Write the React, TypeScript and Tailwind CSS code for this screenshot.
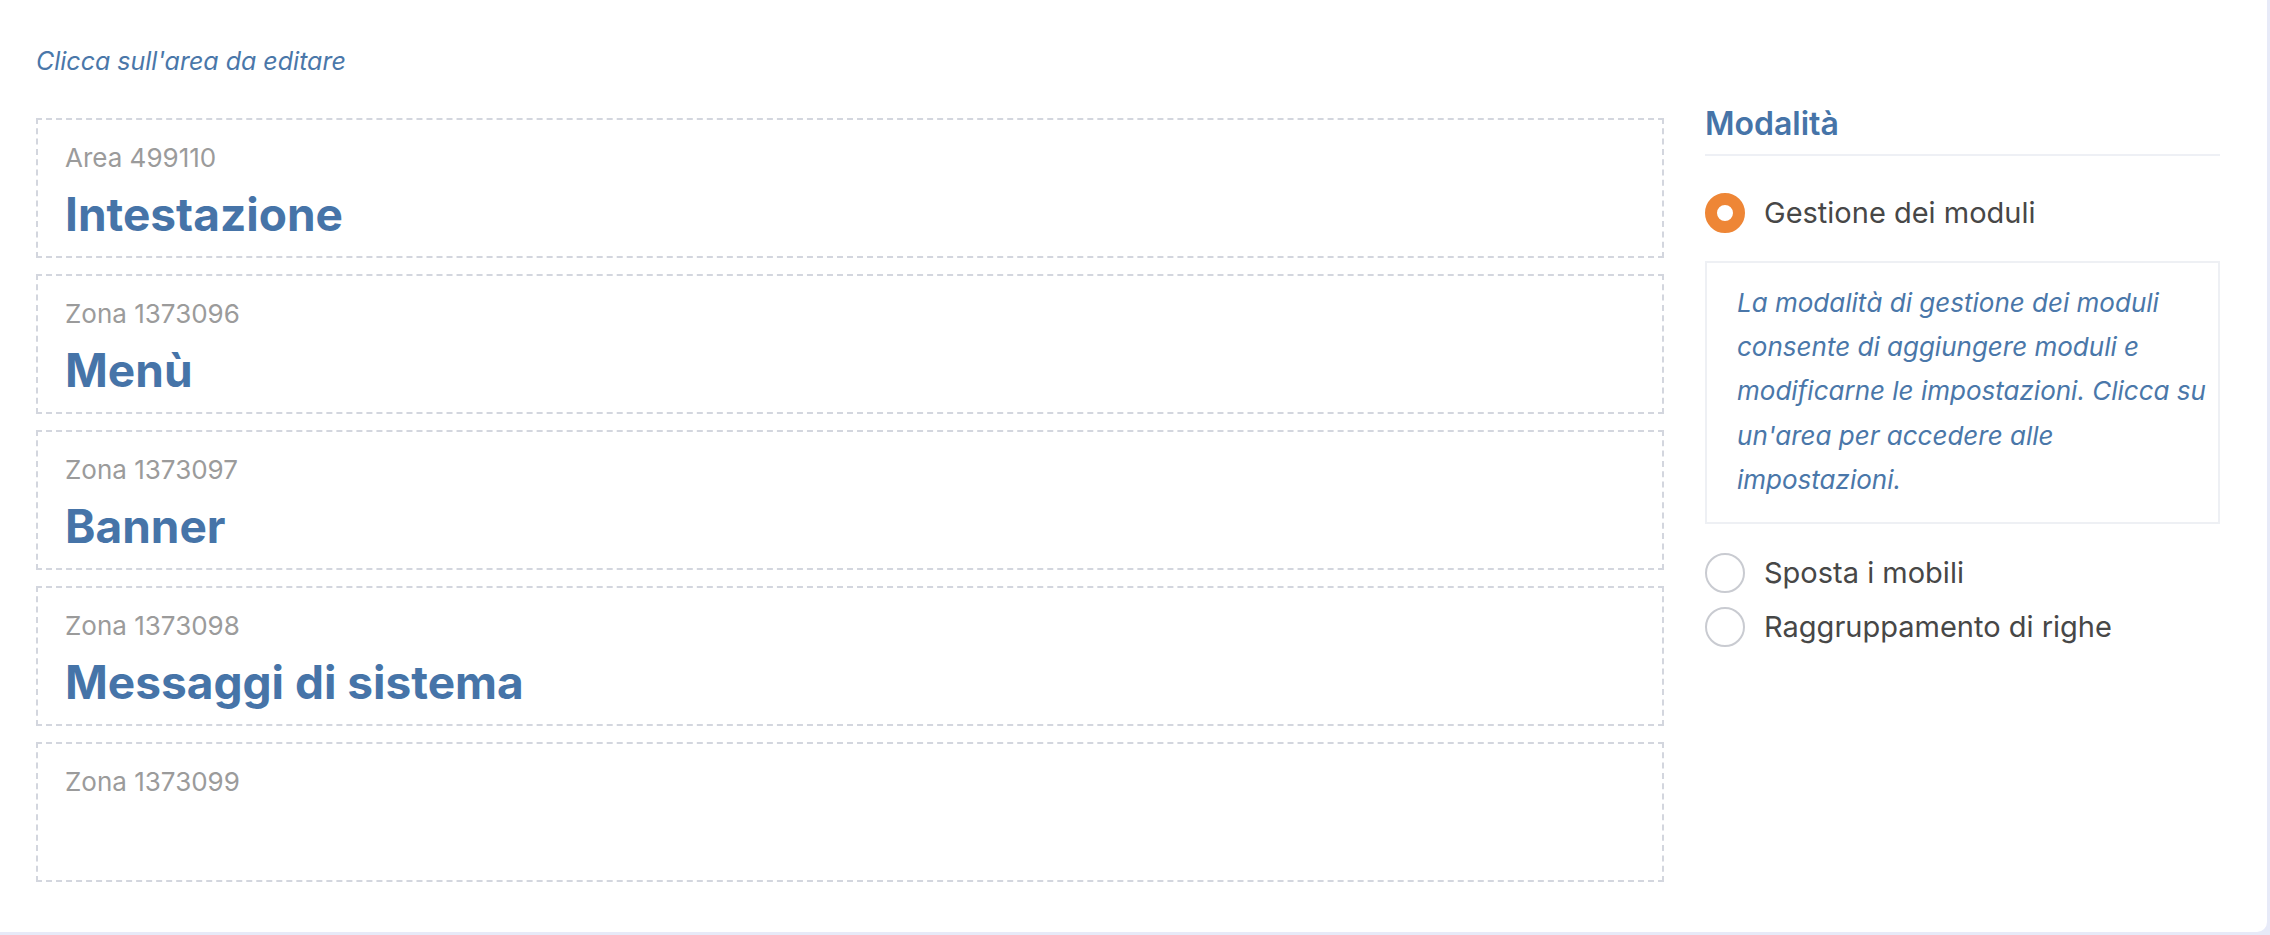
import { useState } from "react";

type Modo = "moduli" | "mobili" | "righe";

const aree = [
    { etichetta: "Area 499110", titolo: "Intestazione" },
    { etichetta: "Zona 1373096", titolo: "Menù" },
    { etichetta: "Zona 1373097", titolo: "Banner" },
    { etichetta: "Zona 1373098", titolo: "Messaggi di sistema" },
    { etichetta: "Zona 1373099", titolo: "" },
];

const modi: { id: Modo; nome: string }[] = [
    { id: "moduli", nome: "Gestione dei moduli" },
    { id: "mobili", nome: "Sposta i mobili" },
    { id: "righe", nome: "Raggruppamento di righe" },
];

function Radio({ attivo, nome, onClick }: { attivo: boolean; nome: string; onClick: () => void }) {
    return (
        <button type="button" onClick={onClick} className="flex h-[40px] items-center gap-[19px] text-left">
            <span
                className={`h-[40px] w-[40px] shrink-0 rounded-full bg-white ${
                    attivo ? "border-[12px] border-[#ee8636]" : "border-2 border-[#c9cbd1]"
                }`}
            />
            <span className="text-[29px] leading-[40px] text-[#474747]">{nome}</span>
        </button>
    );
}

export default function App() {
    const [modo, setModo] = useState<Modo>("moduli");

    return (
        <div className="min-h-screen bg-[#e7eaf8] font-['Inter','Liberation_Sans',sans-serif]">
            <div className="h-[932px] w-[2267px] rounded-br-[10px] bg-white pl-[36px] pr-[47px] pt-[42px]">
                <p className="text-[25px] italic leading-[39px] text-[#4a77a9]">Clicca sull'area da editare</p>

                <div className="mt-[24px] flex items-start gap-[41px]">
                    {/* Aree della pagina */}
                    <div className="flex flex-1 flex-col gap-[16px] pt-[13px]">
                        {aree.map((a) => (
                            <div
                                key={a.etichetta}
                                className="h-[140px] cursor-pointer border-2 border-dashed border-[#d3d6de] px-[27px] pt-[18px]"
                            >
                                <div className="text-[26px] leading-[39px] text-[#9b9b9b]">{a.etichetta}</div>
                                {a.titolo && (
                                    <div className="text-[46px] font-bold leading-[74px] text-[#4674a8]">{a.titolo}</div>
                                )}
                            </div>
                        ))}
                    </div>

                    {/* Modalità */}
                    <div className="w-[515px] shrink-0">
                        <h3 className="border-b-2 border-[#eef0f5] pb-[11px] text-[32px] font-semibold leading-[38px] text-[#4674a8]">
                            Modalità
                        </h3>
                        <div className="mt-[37px]">
                            <Radio attivo={modo === "moduli"} nome={modi[0].nome} onClick={() => setModo("moduli")} />
                        </div>
                        <div className="mt-[28px] border-2 border-[#eef0f4] px-[30px] pb-[20px] pt-[18px]">
                            <p className="whitespace-nowrap text-[26px] italic leading-[44.2px] text-[#4a77a9]">
                                La modalità di gestione dei moduli
                                <br />
                                consente di aggiungere moduli e
                                <br />
                                modificarne le impostazioni. Clicca su
                                <br />
                                un'area per accedere alle
                                <br />
                                impostazioni.
                            </p>
                        </div>
                        <div className="mt-[29px] flex flex-col gap-[14px]">
                            {modi.slice(1).map((m) => (
                                <Radio key={m.id} attivo={modo === m.id} nome={m.nome} onClick={() => setModo(m.id)} />
                            ))}
                        </div>
                    </div>
                </div>
            </div>
        </div>
    );
}
